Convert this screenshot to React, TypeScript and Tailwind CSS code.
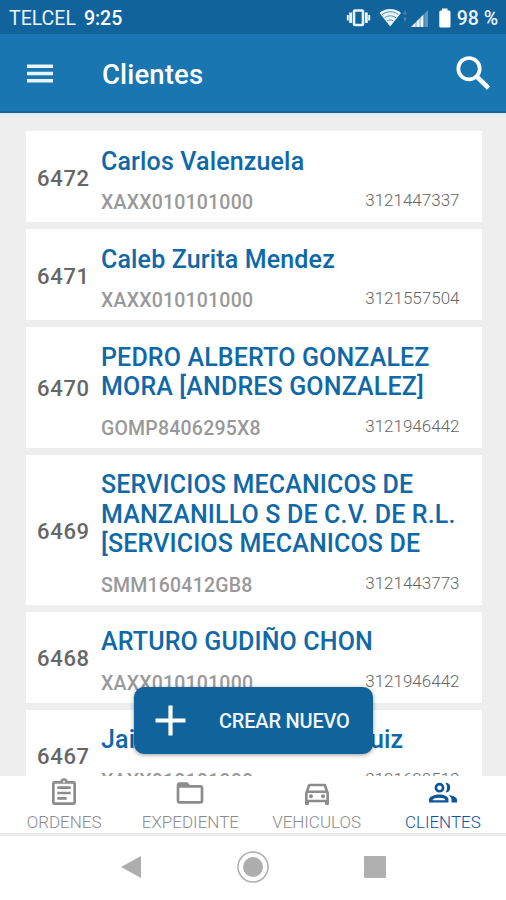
import { MdFolderOpen, MdOutlineAssignment, MdOutlineDirectionsCar } from "react-icons/md";

type Client = {
  id: number;
  name: string[];
  rfc: string;
  phone: string;
};

const clients: Client[] = [
  { id: 6472, name: ["Carlos Valenzuela"], rfc: "XAXX010101000", phone: "3121447337" },
  { id: 6471, name: ["Caleb Zurita Mendez"], rfc: "XAXX010101000", phone: "3121557504" },
  { id: 6470, name: ["PEDRO ALBERTO GONZALEZ", "MORA [ANDRES GONZALEZ]"], rfc: "GOMP8406295X8", phone: "3121946442" },
  {
    id: 6469,
    name: ["SERVICIOS MECANICOS DE", "MANZANILLO S DE C.V. DE R.L.", "[SERVICIOS MECANICOS DE"],
    rfc: "SMM160412GB8",
    phone: "3121443773",
  },
  { id: 6468, name: ["ARTURO GUDIÑO CHON"], rfc: "XAXX010101000", phone: "3121946442" },
  { id: 6467, name: ["Jaime Alejandro Sosa Ruiz"], rfc: "XAXX010101000", phone: "3121620518" },
];

function ClientsIcon({ className }: { className?: string }) {
  return (
    <svg className={className} viewBox="0 0 32 32" fill="currentColor">
      <path fillRule="evenodd" d="M12.500 5.800a4.900 4.900 0 1 1 0 9.800a4.900 4.900 0 1 1 0-9.800zM12.500 8.400a2.300 2.300 0 1 0 0 4.600a2.300 2.300 0 1 0 0-4.600z" />
      <path d="M18.600 5.900c6.200-0.700 6.200 10.300 0 9.600c2-2.700 2-6.900 0-9.600z" />
      <path fillRule="evenodd" d="M2 25.500v-3c0-3 6-5 10.500-5s9 2 9 5v3zM5.500 23.200h13c-1-3.200-12-3.200-13 0z" />
      <path d="M21.500 17.900c4.500 0.600 8.500 2.200 8.500 4.800v2.800h-5.500v-2.800c0-1.900-1.100-3.500-3-4.800z" />
    </svg>
  );
}

const tabs = [
  { label: "ORDENES", icon: MdOutlineAssignment, active: false },
  { label: "EXPEDIENTE", icon: MdFolderOpen, active: false },
  { label: "VEHICULOS", icon: MdOutlineDirectionsCar, active: false },
  { label: "CLIENTES", icon: ClientsIcon, active: true },
];

function StatusBar() {
  return (
    <div className="h-[34px] shrink-0 bg-[#10639b] flex items-center justify-between pl-[9px] pr-[8px] pt-[3px] text-[19.5px] text-[#eaf4fb] whitespace-nowrap">
      <div className="flex gap-[8px]">
        <span>TELCEL</span>
        <span className="font-medium text-white">9:25</span>
      </div>
      <div className="flex items-center">
        <svg className="-mt-[1px]" width="25" height="20" viewBox="0 0 25 20" fill="none" stroke="#eaf4fb">
          <rect x="8" y="2.5" width="9" height="14.5" rx="1" strokeWidth="2.6" />
          <path d="M4.6 4.5v10.500M20.4 4.5v10.500" strokeWidth="2.8" />
          <path d="M1.8 7v5.5M23.2 7v5.5" strokeWidth="2" />
        </svg>
        <svg className="ml-[8px] -mt-[2px]" width="28" height="20" viewBox="0 0 28 20">
          <path d="M0.5 5C6 -0.3 16.5 -0.3 22 5L11.2 18.5Z" fill="#eaf4fb" />
          <path d="M3 6.6c5-3.8 11.5-3.8 16.5 0M5.6 9.8c3.4-2.6 8-2.6 11.4 0M8 13c2-1.5 4.4-1.5 6.4 0" fill="none" stroke="#10639b" strokeWidth="0.7" />
          <path d="M26 2l2 4.5h-4zM26 14l2-4.5h-4z" fill="#4585b2" />
        </svg>
        <svg className="ml-[4px]" width="18" height="19" viewBox="0 0 18 19">
          <path d="M17 1v17H0z" fill="#5d97bf" />
          <path d="M12.5 5.5V18H0z" fill="#eaf4fb" />
          <path d="M5 11v7M9 8v10M13 4v14" stroke="#10639b" strokeWidth="0.5" />
        </svg>
        <svg className="ml-[10px] -mt-[2px]" width="12" height="20" viewBox="0 0 12 20" fill="#fff">
          <path d="M3 0.5h5.5V2.5H10q1.5 0 1.5 1.5V18q0 1.5-1.5 1.5H1.8Q0.3 19.5 0.3 18V4q0-1.5 1.5-1.5H3z" />
        </svg>
        <span className="ml-[6px] font-medium">98 %</span>
      </div>
    </div>
  );
}

function Header() {
  return (
    <header className="h-[79px] shrink-0 bg-[#1976b0] border-b-2 border-[#10669f] flex items-center px-[16px]">
      <svg className="ml-[11px] mt-[2px]" width="26" height="19" viewBox="0 0 26 19" stroke="#eaf4fb" strokeWidth="3.4">
        <path d="M0 2.2h26M0 9.5h26M0 16.8h26" />
      </svg>
      <h1 className="ml-[49px] mt-[5px] text-[27.5px] tracking-[0.15px] font-medium text-white">Clientes</h1>
      <svg className="ml-auto mr-[0.5px] mt-[1px]" width="34" height="34" viewBox="0 0 34 34" fill="none" stroke="#fff">
        <circle cx="13" cy="12.7" r="10.7" strokeWidth="3.7" />
        <path d="M20.5 20.3L32.5 32" strokeWidth="4.6" />
      </svg>
    </header>
  );
}

function ClientCard({ client }: { client: Client }) {
  return (
    <div className="shrink-0 bg-white flex items-center pl-[11px] pr-[22px]">
      <span className="w-[64px] shrink-0 pt-[3px] text-[22px] tracking-[0.7px] font-medium text-[#666]">{client.id}</span>
      <div className="flex-1 pt-[15.5px] pb-[8px]">
        <h2 className="text-[25px] leading-[29.5px] tracking-[0.15px] font-medium text-[#0f68a7] whitespace-nowrap">
          {client.name.map((line) => (
            <span key={line} className="block">{line}</span>
          ))}
        </h2>
        <div className="mt-[15px] flex items-start justify-between">
          <span className="text-[19.5px] leading-[23px] tracking-[0.2px] font-medium text-[#999]">{client.rfc}</span>
          <span className="text-[17px] leading-[19px] font-light text-[#666]">{client.phone}</span>
        </div>
      </div>
    </div>
  );
}

function BottomNav() {
  return (
    <nav className="h-[60px] shrink-0 bg-white border-b-[3px] border-[#ebebeb] grid grid-cols-4 pl-[1px]">
      {tabs.map(({ label, icon: Icon, active }) => (
        <div key={label} className={active ? "flex flex-col items-center text-[#10559b]" : "flex flex-col items-center text-[#8c8c8c]"}>
          <Icon className="mt-[1px] size-[32px]" />
          <span className="mt-[3px] text-[17px] leading-[20px] font-light">{label}</span>
        </div>
      ))}
    </nav>
  );
}

function SystemBar() {
  return (
    <div className="flex-1 bg-white">
      <div className="h-[62px] flex items-center justify-center pl-[1px]">
        <svg width="20" height="22" viewBox="0 0 20 22" fill="#aeaeae">
          <path d="M20 0v22L0 11z" />
        </svg>
        <svg className="ml-[96px] mr-[95px]" width="32" height="32" viewBox="0 0 32 32">
          <circle cx="16" cy="16" r="15" fill="none" stroke="#aeaeae" strokeWidth="1.5" />
          <circle cx="16" cy="16" r="10" fill="#aeaeae" />
        </svg>
        <div className="size-[22px] rounded-[1px] bg-[#b0b0b0]" />
      </div>
    </div>
  );
}

export default function App() {
  return (
    <div className="w-[506px] h-[900px] overflow-hidden flex flex-col bg-white font-['Roboto',sans-serif]">
      <StatusBar />
      <Header />
      <main className="relative h-[663px] shrink-0 overflow-hidden bg-[#eeeeee]">
        <div className="h-[3px] bg-linear-to-b from-[#dfe5ea] to-[#eeeeee]" />
        <div className="pt-[15px] pl-[26px] pr-[24.5px] flex flex-col gap-[7px]">
          {clients.map((c) => (
            <ClientCard key={c.id} client={c} />
          ))}
        </div>

        <button className="absolute left-[134px] bottom-[22.5px] w-[239px] h-[67px] rounded-[10px] bg-[#10639b] shadow-[0_1px_4px_rgba(0,0,0,0.4)] flex items-center pl-[21px]">
          <svg width="31" height="31" viewBox="0 0 31 31" stroke="#fff" strokeWidth="4.2">
            <path d="M15.5 0.5v30M0.5 15.5h30" />
          </svg>
          <span className="ml-[33px] pt-[1px] text-[20px] tracking-[-0.2px] font-medium text-[#eef6fc] whitespace-nowrap">CREAR NUEVO</span>
        </button>
      </main>
      <BottomNav />
      <SystemBar />
    </div>
  );
}
